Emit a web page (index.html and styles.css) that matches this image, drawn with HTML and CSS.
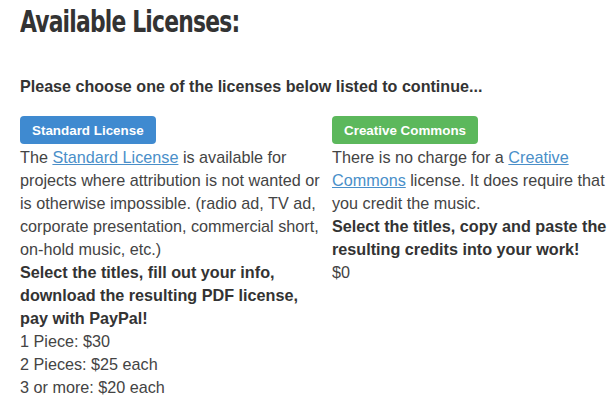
FILE: index.html
```html
<!DOCTYPE html>
<html lang="en">
<head>
  <meta charset="UTF-8">
  <title>Available Licenses</title>
  <link rel="stylesheet" href="styles.css">
</head>
<body>
  <div class="container">
    <h1>Available Licenses:</h1>
    <p class="intro">Please choose one of the licenses below listed to continue...</p>
    <div class="licenses">
      <div class="license">
        <span class="label label-primary">Standard License</span>
        <p>The <a href="#">Standard License</a> is available for projects where attribution is not wanted or is otherwise impossible. (radio ad, TV ad, corporate presentation, commercial short, on-hold music, etc.)</p>
        <p class="strong">Select the titles, fill out your info, download the resulting PDF license, pay with PayPal!</p>
        <p>1 Piece: $30<br>2 Pieces: $25 each<br>3 or more: $20 each</p>
      </div>
      <div class="license">
        <span class="label label-success">Creative Commons</span>
        <p>There is no charge for a <a href="#">Creative Commons</a> license. It does require that you credit the music.</p>
        <p class="strong">Select the titles, copy and paste the resulting credits into your work!</p>
        <p>$0</p>
      </div>
    </div>
  </div>
</body>
</html>
```

FILE: styles.css
```css
body { font-family: "Liberation Sans", Arial, sans-serif; font-size: 16.2px; line-height: 23px; color: #444; background: #fff; margin: 0; padding: 0; }
.container { padding: 0 0 0 20px; }
h1 { font-family: "DejaVu Sans", sans-serif; font-stretch: condensed; font-weight: bold; font-size: 30px; line-height: 40px; color: #333; margin: 2px 0 0; letter-spacing: -1px; transform: scaleX(0.81); transform-origin: left center; }
.intro { font-weight: bold; font-size: 16.1px; color: #333; margin: 33px 0 18px; }
.licenses { display: grid; grid-template-columns: 312px 1fr; }
.license { padding-right: 6px; }
.license p { margin: 0; }
.strong { font-weight: bold; color: #333; }
.label { display: table; color: #fff; font-weight: bold; font-size: 13.4px; line-height: 17px; padding: 5.5px 12px; border-radius: 4px; margin-bottom: 2px; }
.label-primary { background: #3f8ad0; }
.label-success { background: #5cb85c; }
a { color: #4a8fc9; text-decoration: underline; }
```
